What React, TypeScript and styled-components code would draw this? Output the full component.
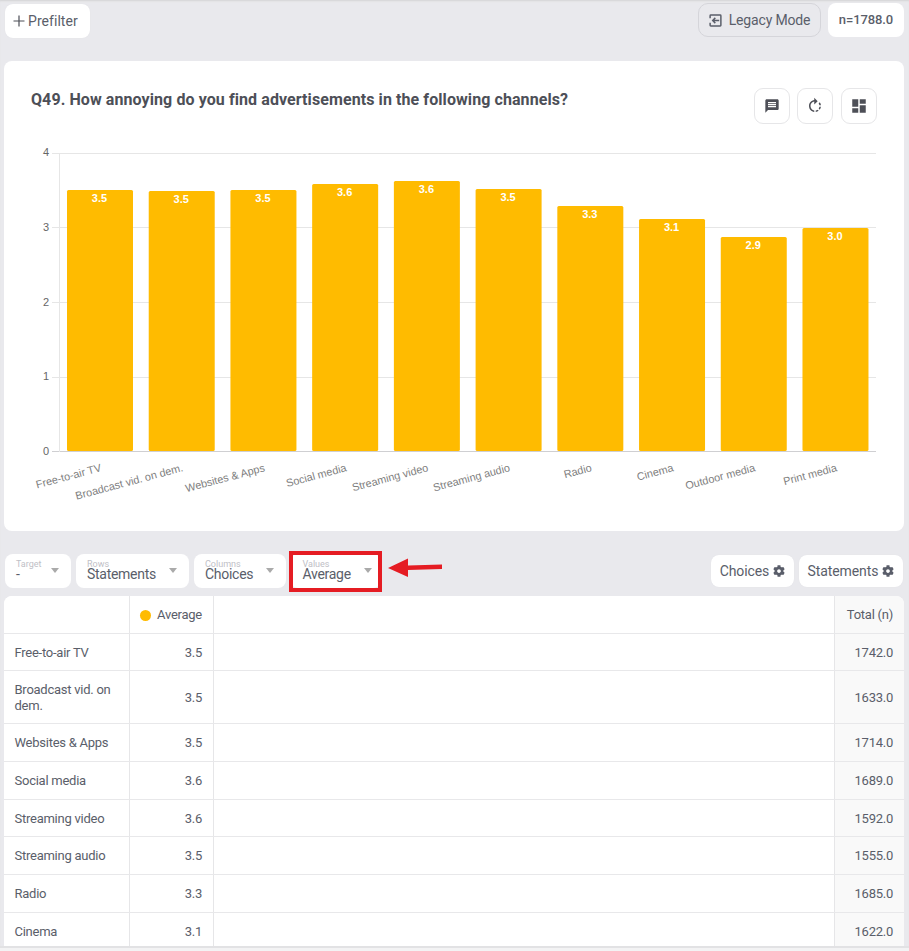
import React from "react";
import styled, { createGlobalStyle } from "styled-components";
import { MdMessage, MdDashboard, MdRotateRight } from "react-icons/md";
import { FaCog } from "react-icons/fa";

const Global = createGlobalStyle`
  html, body { margin: 0; padding: 0; background: #e9e9ed; }
  body { font-family: Roboto, "Liberation Sans", sans-serif; color: #5a5e6a; overflow: hidden; }
`;

const Page = styled.div`
  width: 909px;
  height: 951px;
  overflow: hidden;
  box-sizing: border-box;
  box-shadow: inset 0 2px 2px -1px #d4d4d6;
  display: flex;
  flex-direction: column;
`;

const TopBar = styled.div`
  display: flex;
  align-items: flex-start;
  justify-content: space-between;
  padding: 3px 5px 0;
  height: 37px;
`;

const PrefilterButton = styled.div`
  display: flex;
  align-items: center;
  gap: 3px;
  height: 34px;
  margin-top: 1px;
  padding: 0 12px 0 8px;
  box-sizing: border-box;
  width: 85px;
  background: #fff;
  border-radius: 8px;
  font-size: 14px;
  letter-spacing: 0.05px;
  box-shadow: 0 0 1px #dcdce0;
`;

const TopRight = styled.div`
  display: flex;
  gap: 7px;
`;

const LegacyButton = styled.div`
  display: flex;
  align-items: center;
  justify-content: center;
  gap: 7px;
  width: 123px;
  height: 34px;
  box-sizing: border-box;
  border: 1px solid #d5d5da;
  border-radius: 10px;
  font-size: 14px;
  letter-spacing: -0.15px;
`;

const Count = styled.div`
  display: flex;
  align-items: center;
  justify-content: center;
  width: 76px;
  height: 34px;
  padding-bottom: 1px;
  box-sizing: border-box;
  background: #fff;
  border-radius: 8px;
  font-size: 13px;
  letter-spacing: -0.1px;
  font-weight: 500;
`;

const Card = styled.section`
  margin: 21px 5px 0 4px;
  height: 470px;
  box-sizing: border-box;
  background: #fff;
  border-radius: 8px;
  padding-top: 27px;
`;

const CardHeader = styled.div`
  display: flex;
  justify-content: space-between;
  align-items: flex-start;
  padding: 0 27px;
  height: 36px;
  margin-bottom: 16px;
`;

const Title = styled.h2`
  margin: 2px 0 0;
  font-size: 16px;
  line-height: 20px;
  font-weight: 700;
  letter-spacing: 0.085px;
  color: #4d4f57;
`;

const IconGroup = styled.div`
  display: flex;
  gap: 7px;
`;

const IconButton = styled.div`
  width: 36px;
  height: 36px;
  box-sizing: border-box;
  border: 1px solid #e6e6e8;
  border-radius: 9px;
  display: flex;
  align-items: center;
  justify-content: center;
  color: #4d4f57;
  &:last-child { margin-left: 1px; }
`;

const ChartSvg = styled.svg`
  display: block;
  width: 900px;
  height: 360px;
`;

const FilterRow = styled.div`
  display: flex;
  justify-content: space-between;
  align-items: center;
  height: 34px;
  margin: 23px 6px 0 5px;
`;

const Selects = styled.div`
  display: flex;
  gap: 5px;
  align-items: center;
`;

const Select = styled.div<{ $w: number; $hl?: boolean }>`
  position: relative;
  width: ${(p) => p.$w}px;
  height: 34px;
  box-sizing: border-box;
  background: #fff;
  border-radius: 8px;
  padding: 6px ${(p) => (p.$hl ? 9 : 12.5)}px 0 ${(p) => (p.$hl ? 12.5 : 11)}px;
  display: flex;
  align-items: flex-start;
  justify-content: space-between;
  ${(p) =>
    p.$hl
      ? `margin-left: -1px;
  &::after {
    content: "";
    position: absolute;
    left: -1px;
    right: -1px;
    top: -3px;
    bottom: -4px;
    border: 4px solid #e51c23;
  }`
      : ""}
`;

const SelectText = styled.div`
  display: flex;
  flex-direction: column;
`;

const SelectLabel = styled.span`
  font-size: 9px;
  line-height: 8px;
  color: #c0c0c6;
`;

const SelectValue = styled.span`
  font-size: 14px;
  line-height: 12px;
  letter-spacing: -0.28px;
  color: #5a5e6a;
`;

const Caret = styled.i`
  width: 0;
  height: 0;
  margin-top: 8px;
  border-left: 4.5px solid transparent;
  border-right: 4.5px solid transparent;
  border-top: 5px solid #aaa;
`;

const Arrow = styled.svg`
  position: absolute;
  left: 98px;
  top: 4px;
`;

const Tools = styled.div`
  display: flex;
  gap: 5px;
`;

const ToolButton = styled.div<{ $w: number }>`
  width: ${(p) => p.$w}px;
  height: 32px;
  background: #fff;
  border-radius: 8px;
  display: flex;
  align-items: center;
  justify-content: center;
  gap: 4px;
  font-size: 14px;
  letter-spacing: -0.1px;
  box-shadow: 0 0 1px #dcdce0;
`;

const Table = styled.div`
  margin: 8px 5px 0 4px;
  height: 350px;
  background: #fff;
  border-radius: 8px 8px 0 0;
  overflow: hidden;
`;

const Row = styled.div<{ $h: number }>`
  display: grid;
  grid-template-columns: 126px 84px 621px 69px;
  height: ${(p) => p.$h}px;
  box-sizing: border-box;
  border-bottom: 1px solid #e8e8ea;
  &:last-child { border-bottom: 0; }
`;

const Cell = styled.div<{ $align?: string; $total?: boolean }>`
  display: flex;
  align-items: center;
  justify-content: ${(p) => p.$align || "flex-start"};
  padding: 1px 11px 0 10.5px;
  font-size: 13px;
  line-height: 16px;
  letter-spacing: -0.25px;
  box-sizing: border-box;
  color: #5a5e6a;
  white-space: ${(p) => (p.$align ? "nowrap" : "normal")};
  background: ${(p) => (p.$total ? "#f9f9f9" : "#fff")};
  border-right: 1px solid #e6e6e8;
  &:last-child { border-right: 0; }
`;

const Dot = styled.span`
  flex: none;
  width: 11px;
  height: 11px;
  border-radius: 50%;
  background: #ffbb00;
  margin-right: 6px;
`;

const Footer = styled.div`
  flex: 1;
  background: #f3f3f4;
  border-top: 2px solid #e2e2e4;
`;

const bars: [string, string, number][] = [
  ["Free-to-air TV", "3.5", 190],
  ["Broadcast vid. on dem.", "3.5", 191],
  ["Websites & Apps", "3.5", 190],
  ["Social media", "3.6", 184],
  ["Streaming video", "3.6", 181],
  ["Streaming audio", "3.5", 189],
  ["Radio", "3.3", 206],
  ["Cinema", "3.1", 219],
  ["Outdoor media", "2.9", 237],
  ["Print media", "3.0", 228],
];

const rows: [string, string, string, number][] = [
  ["Free-to-air TV", "3.5", "1742.0", 37],
  ["Broadcast vid. on dem.", "3.5", "1633.0", 53],
  ["Websites & Apps", "3.5", "1714.0", 38],
  ["Social media", "3.6", "1689.0", 38],
  ["Streaming video", "3.6", "1592.0", 37],
  ["Streaming audio", "3.5", "1555.0", 38],
  ["Radio", "3.3", "1685.0", 38],
  ["Cinema", "3.1", "1622.0", 37],
];

const Chart = () => (
  <ChartSvg viewBox="4 140 900 360">
    {[153.5, 227.5, 302.5, 377.5].map((y) => (
      <line key={y} x1="52" x2="876" y1={y} y2={y} stroke="#e6e6e6" />
    ))}
    <line x1="52" x2="876" y1="451.5" y2="451.5" stroke="#cfcfd2" />
    <line x1="59.5" x2="59.5" y1="153" y2="452" stroke="#e6e6e6" />
    {["4", "3", "2", "1", "0"].map((t, i) => (
      <text key={t} x="49" y={156 + i * 74.8} textAnchor="end" fontFamily="'Liberation Sans', sans-serif" fontSize="11" fill="#666">
        {t}
      </text>
    ))}
    {bars.map(([label, value, top], i) => {
      const x = 67 + i * 81.72;
      const cx = x + 33;
      return (
        <g key={label}>
          <rect x={x} y={top} width="66" height={451 - top} rx="1.5" fill="#ffbb00" />
          <text x={cx - 0.5} y={top + 12} textAnchor="middle" fontFamily="'Liberation Sans', sans-serif" fontSize="11" fontWeight="700" fill="#fff">
            {value}
          </text>
          <text
            transform={`translate(${cx + 2} 471) rotate(-15)`}
            textAnchor="end"
            fontFamily="'Liberation Sans', sans-serif"
            fontSize="10.85"
            fill="#808080"
          >
            {label}
          </text>
        </g>
      );
    })}
  </ChartSvg>
);

export default function App() {
  return (
    <Page>
      <Global />
      <TopBar>
        <PrefilterButton>
          <svg width="12" height="12" viewBox="0 0 12 12">
            <path d="M6 0.5V11.5M0.5 6H11.5" stroke="#4d4f57" strokeWidth="1.2" />
          </svg>
          Prefilter
        </PrefilterButton>
        <TopRight>
          <LegacyButton>
            <svg width="13" height="13" viewBox="0 0 14 14" fill="none" stroke="#5a5e6a" strokeWidth="1.6">
              <path d="M1.2 4.5V2C1.2 1.5 1.5 1.2 2 1.2H12C12.5 1.2 12.8 1.5 12.8 2V12C12.8 12.5 12.5 12.8 12 12.8H2C1.5 12.8 1.2 12.5 1.2 12V9.5" />
              <path d="M11 7H4M6.8 4.2L4 7L6.8 9.8" />
            </svg>
            Legacy Mode
          </LegacyButton>
          <Count>n=1788.0</Count>
        </TopRight>
      </TopBar>
      <Card>
        <CardHeader>
          <Title>Q49. How annoying do you find advertisements in the following channels?</Title>
          <IconGroup>
            <IconButton>
              <MdMessage size={16} />
            </IconButton>
            <IconButton>
              <MdRotateRight size={18} />
            </IconButton>
            <IconButton>
              <MdDashboard size={18} />
            </IconButton>
          </IconGroup>
        </CardHeader>
        <Chart />
      </Card>
      <FilterRow>
        <Selects>
          <Select $w={66}>
            <SelectText>
              <SelectLabel>Target</SelectLabel>
              <SelectValue>-</SelectValue>
            </SelectText>
            <Caret />
          </Select>
          <Select $w={113}>
            <SelectText>
              <SelectLabel>Rows</SelectLabel>
              <SelectValue>Statements</SelectValue>
            </SelectText>
            <Caret />
          </Select>
          <Select $w={92}>
            <SelectText>
              <SelectLabel>Columns</SelectLabel>
              <SelectValue>Choices</SelectValue>
            </SelectText>
            <Caret />
          </Select>
          <Select $w={91} $hl>
            <SelectText>
              <SelectLabel>Values</SelectLabel>
              <SelectValue>Average</SelectValue>
            </SelectText>
            <Caret />
            <Arrow width="56" height="20" viewBox="0 0 56 20">
              <path d="M0 10L20 0.5V7.5L54 6.5V11L20 12V19Z" fill="#e51c23" />
            </Arrow>
          </Select>
        </Selects>
        <Tools>
          <ToolButton $w={83}>
            Choices <FaCog size={12} />
          </ToolButton>
          <ToolButton $w={104}>
            Statements <FaCog size={12} />
          </ToolButton>
        </Tools>
      </FilterRow>
      <Table>
        <Row $h={38}>
          <Cell />
          <Cell $align="flex-end">
            <Dot />
            Average
          </Cell>
          <Cell />
          <Cell $align="flex-end" $total>
            Total (n)
          </Cell>
        </Row>
        {rows.map(([name, avg, total, h]) => (
          <Row key={name} $h={h}>
            <Cell>{name}</Cell>
            <Cell $align="flex-end">{avg}</Cell>
            <Cell />
            <Cell $align="flex-end" $total>
              {total}
            </Cell>
          </Row>
        ))}
      </Table>
      <Footer />
    </Page>
  );
}
